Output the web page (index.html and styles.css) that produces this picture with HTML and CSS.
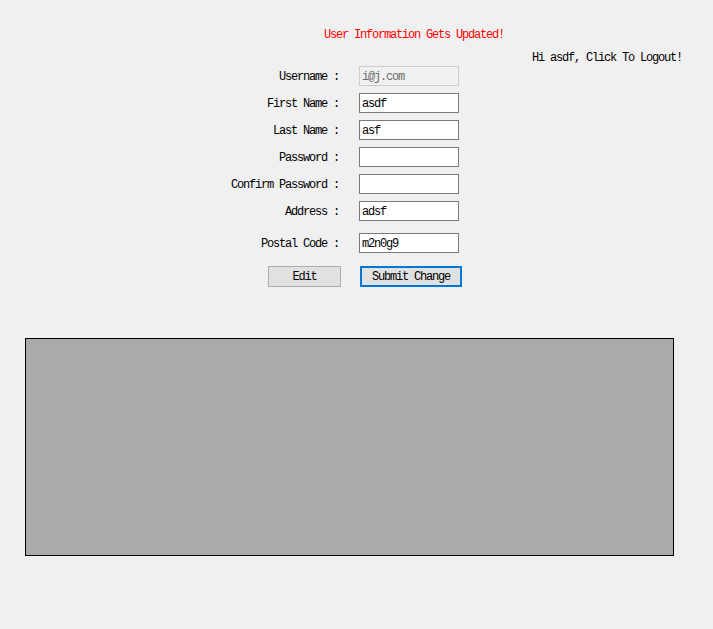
FILE: index.html
```html
<!DOCTYPE html>
<html>
<head>
<meta charset="utf-8">
<link rel="stylesheet" href="styles.css">
</head>
<body>
<div class="page">
  <div class="notice">User Information Gets Updated!</div>
  <div class="greeting">Hi asdf, Click To Logout!</div>
  <form class="form">
    <div class="fields">
      <label class="label">Username :</label>
      <input class="field field-disabled" type="text" value="i@j.com" disabled>
      <label class="label">First Name :</label>
      <input class="field" type="text" value="asdf">
      <label class="label">Last Name :</label>
      <input class="field" type="text" value="asf">
      <label class="label">Password :</label>
      <input class="field" type="password" value="">
      <label class="label">Confirm Password :</label>
      <input class="field" type="password" value="">
      <label class="label">Address :</label>
      <input class="field" type="text" value="adsf">
      <label class="label">Postal Code :</label>
      <input class="field" type="text" value="m2n0g9">
    </div>
    <div class="actions">
      <button type="button" class="btn btn-edit">Edit</button>
      <button type="button" class="btn btn-submit">Submit Change</button>
    </div>
  </form>
  <div class="canvas"></div>
</div>
</body>
</html>
```

FILE: styles.css
```css
html, body {
  margin: 0;
  padding: 0;
  background: #f0f0f0;
}
body {
  font-family: "Liberation Mono", "Courier New", monospace;
  font-size: 12px;
  letter-spacing: -1.2px;
  color: #000;
}
.page {
  padding-top: 29px;
}
.notice {
  color: #ff0000;
  padding-left: 324px;
  height: 12px;
  line-height: 12px;
}
.greeting {
  margin-top: 11px;
  height: 12px;
  line-height: 12px;
  text-align: right;
  padding-right: 31px;
}
.form {
  margin-top: 2px;
}
.fields {
  display: grid;
  grid-template-columns: 339px 100px;
  grid-template-rows: repeat(6, 20px) 25px;
  column-gap: 20px;
  row-gap: 7px;
  align-items: end;
}
.label {
  text-align: right;
  line-height: 18px;
  white-space: nowrap;
}
.field {
  box-sizing: border-box;
  width: 100px;
  height: 20px;
  margin: 0;
  border: 1px solid #7a7a7a;
  background: #fff;
  padding: 1px 2px 0;
  font-family: inherit;
  font-size: 12px;
  letter-spacing: -1.2px;
  color: #000;
  outline: none;
}
.field-disabled {
  border-color: #cccccc;
  background: #f0f0f0;
  color: #6d6d6d;
}
.actions {
  display: flex;
  margin-top: 13px;
  padding-left: 268px;
  gap: 19px;
}
.btn {
  box-sizing: border-box;
  height: 21px;
  margin: 0;
  padding: 1px 0 0;
  background: #e1e1e1;
  border: 1px solid #adadad;
  font-family: inherit;
  font-size: 12px;
  letter-spacing: -1.2px;
  color: #000;
}
.btn-edit {
  width: 73px;
}
.btn-submit {
  width: 102px;
  border: 2px solid #0078d7;
}
.canvas {
  box-sizing: border-box;
  margin-top: 51px;
  margin-left: 25px;
  width: 649px;
  height: 218px;
  background: #aaaaaa;
  border: 1px solid #000;
}
```
